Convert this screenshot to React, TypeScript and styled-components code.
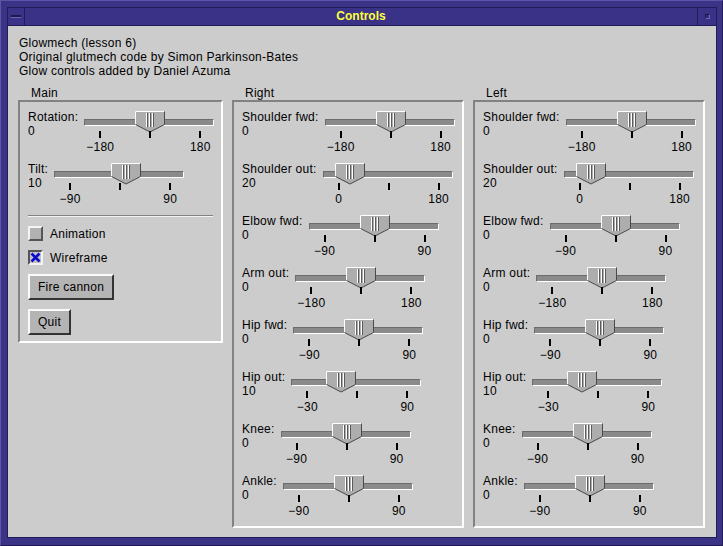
import React from "react";
import styled, { createGlobalStyle } from "styled-components";

const GlobalStyle = createGlobalStyle`
  html, body { margin: 0; padding: 0; background: #3b3386; }
  body {
    font-family: "Liberation Sans", Arial, Helvetica, sans-serif;
    font-size: 12px;
    letter-spacing: 0.25px;
    color: #000;
  }
  * { box-sizing: border-box; }
`;

const Window = styled.div`
  width: 723px;
  height: 546px;
  background: #3b3386;
  border: 1px solid;
  border-color: #5b54a8 #201a55 #201a55 #5b54a8;
  padding: 6px 5px 7px 6px;
  display: flex;
`;

const Inner = styled.div`
  flex: 1;
  display: flex;
  flex-direction: column;
  border: 1px solid #211b5a;
`;

const TitleBar = styled.div`
  height: 18px;
  display: flex;
  align-items: stretch;
  background: #3a3287;
  border-bottom: 1px solid #211b5a;
`;

const MenuButton = styled.div`
  width: 17px;
  border-right: 1px solid #211b5a;
  display: flex;
  align-items: center;
  justify-content: center;
`;

const Dash = styled.span`
  width: 10px;
  height: 3px;
  background: #1d1850;
  border-bottom: 1px solid #6c65b6;
`;

const Title = styled.div`
  flex: 1;
  text-align: center;
  color: #ffff3c;
  font-weight: bold;
  font-size: 12px;
  letter-spacing: 0;
  line-height: 17px;
`;

const MaxButton = styled.div`
  width: 19px;
  border-left: 1px solid #211b5a;
  display: flex;
  align-items: center;
  justify-content: center;
`;

const MaxSquare = styled.span`
  width: 5px;
  height: 5px;
  border: 1px solid;
  border-color: #1d1850 #6c65b6 #6c65b6 #1d1850;
  background: #342c7c;
`;

const Content = styled.div`
  flex: 1;
  background: #cccccc;
  padding: 10px 11px 0 10px;
`;

const Info = styled.div`
  line-height: 14px;
  padding-left: 1px;
`;

const Columns = styled.div`
  margin-top: 8px;
  display: grid;
  grid-template-columns: 205px 232px 232px;
  column-gap: 9px;
  align-items: start;
`;

const Group = styled.div`
  display: flex;
  flex-direction: column;
`;

const GroupLabel = styled.div`
  line-height: 14px;
  padding-left: 13px;
`;

const GroupBox = styled.div<{ $bottom: number }>`
  border: 2px solid;
  border-color: #828282 #ffffff #ffffff #828282;
  padding: 8px 8px ${(p) => p.$bottom}px 8px;
  display: flex;
  flex-direction: column;
`;

const Row = styled.div`
  display: flex;
  height: 44px;
  & + & { margin-top: 8px; }
`;

const LabelCol = styled.div`
  display: flex;
  flex-direction: column;
  line-height: 14px;
  margin-right: 6px;
  white-space: nowrap;
`;

const Track = styled.div`
  position: relative;
  width: 130px;
  flex: none;
`;

const Trough = styled.div`
  margin-top: 9px;
  height: 7px;
  background: #8a8a8a;
  border: 1px solid;
  border-color: #6c6c6c #ffffff #ffffff #6c6c6c;
`;

const ThumbSvg = styled.svg`
  position: absolute;
  top: 1px;
  display: block;
`;

const TickStrip = styled.div`
  position: relative;
  height: 7px;
  margin-top: 5px;
`;

const Tick = styled.span`
  position: absolute;
  top: 0;
  width: 2px;
  height: 7px;
  background: #000;
`;

const NumStrip = styled.div`
  position: relative;
  height: 14px;
  margin-top: 2px;
  line-height: 14px;
`;

const Num = styled.span`
  position: absolute;
  top: 0;
  transform: translateX(-50%);
  white-space: nowrap;
`;

const Separator = styled.div`
  margin-top: 9px;
  height: 2px;
  border-top: 1px solid #828282;
  border-bottom: 1px solid #f4f4f4;
`;

const Controls = styled.div`
  margin-top: 9px;
  display: flex;
  flex-direction: column;
  align-items: flex-start;
  gap: 9px;
`;

const CheckRow = styled.label`
  display: flex;
  align-items: center;
  gap: 7px;
  height: 15px;
  line-height: 14px;
`;

const CheckBox = styled.span<{ $on: boolean }>`
  width: 15px;
  height: 15px;
  border: 2px solid;
  border-color: ${(p) =>
    p.$on ? "#555555 #f4f4f4 #f4f4f4 #555555" : "#f4f4f4 #555555 #555555 #f4f4f4"};
  background: ${(p) => (p.$on ? "#c4c4c4" : "#b2b2b2")};
  display: flex;
  align-items: center;
  justify-content: center;
`;

const Button = styled.button`
  height: 26px;
  padding: 0 8px;
  font: inherit;
  font-size: 12px;
  letter-spacing: 0.25px;
  line-height: 14px;
  color: #000;
  background: #b4b4b4;
  border: 2px solid;
  border-color: #fafafa #333333 #333333 #fafafa;
  border-radius: 0;
  cursor: pointer;
`;

type SliderSpec = { label: string; value: number; min: number; max: number };

const TICK0 = 16;
const SPAN = 100;

const pos = (v: number, min: number, max: number) =>
  TICK0 + ((v - min) / (max - min)) * SPAN;

const fmt = (n: number) => (n < 0 ? "\u2212" + Math.abs(n) : String(n));

const Thumb = ({ left }: { left: number }) => (
  <ThumbSvg width={30} height={22} viewBox="0 0 30 22" style={{ left }}>
    <polygon points="0,0 30,0 30,13.5 15,21 0,13.5" fill="#adadad" />
    <polyline points="0.5,13.5 0.5,0.5 29.5,0.5" stroke="#ffffff" fill="none" />
    <polyline points="29.5,0.5 29.5,13.5 15,21 0.5,13.5" stroke="#4a4a4a" fill="none" />
    <rect x={11} y={2} width={1} height={14} fill="#ffffff" />
    <rect x={12} y={2} width={1} height={14} fill="#5a5a5a" />
    <rect x={14} y={2} width={1} height={14} fill="#ffffff" />
    <rect x={15} y={2} width={1} height={14} fill="#5a5a5a" />
    <rect x={17} y={2} width={1} height={14} fill="#ffffff" />
    <rect x={18} y={2} width={1} height={14} fill="#5a5a5a" />
  </ThumbSvg>
);

const Slider = ({ label, value, min, max }: SliderSpec) => {
  const ticks = [min, (min + max) / 2, max];
  return (
    <Row>
      <LabelCol>
        <span>{label}</span>
        <span>{fmt(value)}</span>
      </LabelCol>
      <Track>
        <Trough />
        <Thumb left={pos(value, min, max) - 15} />
        <TickStrip>
          {ticks.map((t, i) => (
            <Tick key={i} style={{ left: pos(t, min, max) - 1 }} />
          ))}
        </TickStrip>
        <NumStrip>
          <Num style={{ left: pos(min, min, max) }}>{fmt(min)}</Num>
          <Num style={{ left: pos(max, min, max) }}>{fmt(max)}</Num>
        </NumStrip>
      </Track>
    </Row>
  );
};

const mainSliders: SliderSpec[] = [
  { label: "Rotation:", value: 0, min: -180, max: 180 },
  { label: "Tilt:", value: 10, min: -90, max: 90 },
];

const limbSliders: SliderSpec[] = [
  { label: "Shoulder fwd:", value: 0, min: -180, max: 180 },
  { label: "Shoulder out:", value: 20, min: 0, max: 180 },
  { label: "Elbow fwd:", value: 0, min: -90, max: 90 },
  { label: "Arm out:", value: 0, min: -180, max: 180 },
  { label: "Hip fwd:", value: 0, min: -90, max: 90 },
  { label: "Hip out:", value: 10, min: -30, max: 90 },
  { label: "Knee:", value: 0, min: -90, max: 90 },
  { label: "Ankle:", value: 0, min: -90, max: 90 },
];

const Check = ({ label, on }: { label: string; on: boolean }) => (
  <CheckRow>
    <CheckBox $on={on}>
      {on && (
        <svg width={11} height={11} viewBox="0 0 11 11">
          <path d="M1.5 1.5 L9.5 9.5 M9.5 1.5 L1.5 9.5" stroke="#0a0ad0" strokeWidth={2.6} />
        </svg>
      )}
    </CheckBox>
    <span>{label}</span>
  </CheckRow>
);

export default function App() {
  return (
    <>
      <GlobalStyle />
      <Window>
        <Inner>
          <TitleBar>
            <MenuButton>
              <Dash />
            </MenuButton>
            <Title>Controls</Title>
            <MaxButton>
              <MaxSquare />
            </MaxButton>
          </TitleBar>
          <Content>
            <Info>
              <div>Glowmech (lesson 6)</div>
              <div>Original glutmech code by Simon Parkinson-Bates</div>
              <div>Glow controls added by Daniel Azuma</div>
            </Info>
            <Columns>
              <Group>
                <GroupLabel>Main</GroupLabel>
                <GroupBox $bottom={6}>
                  {mainSliders.map((s) => (
                    <Slider key={s.label} {...s} />
                  ))}
                  <Separator />
                  <Controls>
                    <Check label="Animation" on={false} />
                    <Check label="Wireframe" on={true} />
                    <Button>Fire cannon</Button>
                    <Button>Quit</Button>
                  </Controls>
                </GroupBox>
              </Group>
              <Group>
                <GroupLabel>Right</GroupLabel>
                <GroupBox $bottom={8}>
                  {limbSliders.map((s) => (
                    <Slider key={s.label} {...s} />
                  ))}
                </GroupBox>
              </Group>
              <Group>
                <GroupLabel>Left</GroupLabel>
                <GroupBox $bottom={8}>
                  {limbSliders.map((s) => (
                    <Slider key={s.label} {...s} />
                  ))}
                </GroupBox>
              </Group>
            </Columns>
          </Content>
        </Inner>
      </Window>
    </>
  );
}
